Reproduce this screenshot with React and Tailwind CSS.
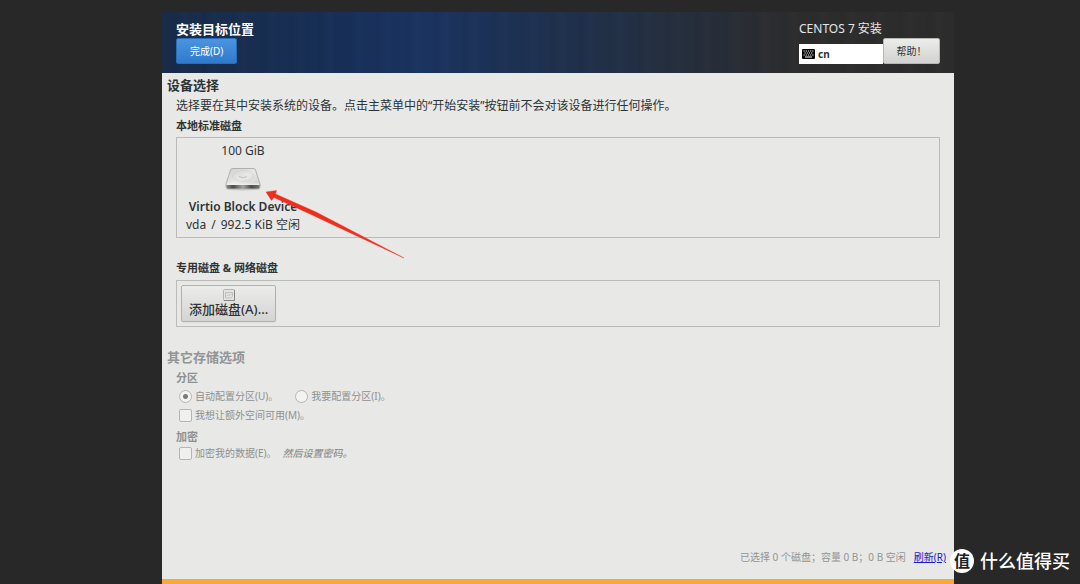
import { useState } from 'react';

const KeyboardIcon = () => (
  <svg width="13" height="10" viewBox="0 0 13 10" aria-hidden="true">
    <rect width="13" height="10" rx="1" fill="#000" />
    <path
      d="M1.500 2h1.200M3.700 2h1.200M5.900 2h1.200M8.100 2h1.200M10.300 2h1.200M2.500 4h1.200M4.700 4h1.200M6.900 4h1.200M9.100 4h1.200M1.500 6h1.200M3.700 6h1.200M5.900 6h1.200M8.100 6h1.200M10.300 6h1.200M3 8h7"
      stroke="#fff"
      strokeWidth="1.1"
    />
  </svg>
);

const DiskIcon = () => (
  <svg className="w-9 h-6" viewBox="0 0 36 24" aria-hidden="true">
    <defs>
      <linearGradient id="diskTop" x1="0" y1="0" x2="1" y2="1">
        <stop offset="0" stopColor="#cfcfcd" />
        <stop offset="0.5" stopColor="#e9e9e8" />
        <stop offset="1" stopColor="#c9c9c7" />
      </linearGradient>
      <linearGradient id="diskFront" x1="0" y1="0" x2="1" y2="0">
        <stop offset="0" stopColor="#8a8a88" />
        <stop offset="0.2" stopColor="#4a4a4a" />
        <stop offset="0.5" stopColor="#a2a2a0" />
        <stop offset="0.75" stopColor="#4a4a4a" />
        <stop offset="1" stopColor="#777" />
      </linearGradient>
    </defs>
    <ellipse cx="18" cy="22" rx="17" ry="1.500" fill="#c4c4c2" />
    <path d="M7.500 1.500h21q1.500 0 2 1.500l4.500 14v3q0 1.500-2 1.500H3q-2 0-2-1.500v-3L5.500 3q.5-1.500 2-1.500z" fill="url(#diskTop)" stroke="#999997" strokeWidth="0.7" />
    <path d="M1.500 18h33v2q0 1.500-1.500 1.500H3q-1.500 0-1.500-1.500z" fill="url(#diskFront)" />
    <path d="M2 17.200h32" stroke="#f6f6f6" strokeWidth="0.9" />
    <ellipse cx="18" cy="9" rx="10.500" ry="5.500" fill="none" stroke="#d0d0ce" strokeWidth="0.8" />
    <path d="M14 9.500q4 2.500 8 0" fill="none" stroke="#b5b5b3" strokeWidth="0.8" />
  </svg>
);

const SmallDiskIcon = () => (
  <svg width="12" height="12" viewBox="0 0 12 12" aria-hidden="true">
    <rect x="0.5" y="0.500" width="11" height="11" rx="1" fill="#e4e4e2" stroke="#b3b3b1" />
    <path d="M1 11.500h10.500V1" fill="none" stroke="#858583" />
    <path d="M2.500 3.500h7v4l-2 1.500h-5zM3.500 7l2-1.500 1.500 1 2-2" fill="none" stroke="#b5b5b3" strokeWidth="0.8" />
  </svg>
);

const RedArrow = () => (
  <svg className="absolute left-[89px] top-[52px] w-[140px] h-[70px]" viewBox="0 0 140 70" aria-hidden="true">
    <path d="M0 2L10.500 0.500L9.500 4L50 22L138 68L44 24L8 7.500L5.500 10.500Z" fill="#f02d1c" stroke="#f02d1c" strokeWidth="0.400" />
  </svg>
);

const Option = ({ type, id, name, checked, onChange, children }) => (
  <div className="flex items-center gap-[3px]">
    <input
      id={id}
      type={type}
      name={name}
      checked={checked}
      onChange={onChange}
      className={
        type === 'radio'
          ? 'appearance-none size-[13px] shrink-0 rounded-full border border-[#b4b6b4] bg-[#f3f3f2] checked:bg-[radial-gradient(circle,#777b7b_0_2px,#f3f3f2_3px)]'
          : 'appearance-none size-[13px] shrink-0 rounded-xs border border-[#b4b6b4] bg-[#f0f0ef] checked:bg-[#777b7b]'
      }
    />
    <label htmlFor={id}>{children}</label>
  </div>
);

const App = () => {
  const [partitioning, setPartitioning] = useState('auto');
  const [extraSpace, setExtraSpace] = useState(false);
  const [encrypt, setEncrypt] = useState(false);

  return (
    <div className="relative min-h-screen flex flex-col bg-[#282828] pt-3 pl-[162px] pr-[126px] text-xs leading-4 text-[#2e3436] font-['Noto_Sans','Noto_Sans_CJK_SC',sans-serif]">
      {/* Header */}
      <header className="flex justify-between px-[14px] pt-2 pb-[9px] bg-[repeating-linear-gradient(90deg,#0000_0_9px,#00000009_13px,#0000_17px,#ffffff03_23px,#0000_29px),linear-gradient(90deg,#192b48_0%,#172f57_22%,#1a3360_33%,#1f304d_50%,#252e3c_66%,#2c2c2d_80%,#2c2c2c_100%)]">
        <div>
          <h1 className="text-[13px] leading-[18px] font-bold text-white">安装目标位置</h1>
          <button
            type="button"
            className="block h-[26px] px-[13px] rounded-xs border border-[#2a6cb8] bg-linear-to-b from-[#4a94e0] to-[#2f7acb] text-[10px] text-white"
          >
            完成(D)
          </button>
        </div>
        <div>
          <p className="text-xs leading-[18px] text-[#e6e6e6]">CENTOS 7 安装</p>
          <div className="flex items-end">
            <div className="flex items-center gap-[3px] w-[84px] h-5 pl-[3px] bg-white text-[10px] font-bold text-[#2e3436]">
              <KeyboardIcon />
              <span>cn</span>
            </div>
            <button
              type="button"
              className="h-[26px] w-[57px] rounded-xs border border-[#b5b7b4] bg-linear-to-b from-[#ececeb] to-[#d2d2d0] text-[10px] text-[#2e3436]"
            >
              帮助！
            </button>
          </div>
        </div>
      </header>

      {/* Device selection */}
      <main className="flex-1 flex flex-col bg-[#e8e8e6] pt-1">
        <h2 className="pl-[5px] text-[13px] font-bold">设备选择</h2>
        <section className="px-[14px]">
          <p className="mt-[5px]">选择要在其中安装系统的设备。点击主菜单中的“开始安装”按钮前不会对该设备进行任何操作。</p>
          <h3 className="mt-1 text-[11px] font-bold">本地标准磁盘</h3>
          <div className="relative mt-[3px] flex border border-[#babcb9] pt-[5px] pb-1 pl-[9px]">
            <div className="flex flex-col items-center">
              <span>100 GiB</span>
              <div className="my-2">
                <DiskIcon />
              </div>
              <strong className="font-semibold">Virtio Block Device</strong>
              <div className="mt-0.5 flex gap-[5px]">
                <span>vda</span>
                <span>/</span>
                <span>992.5 KiB 空闲</span>
              </div>
            </div>
            <RedArrow />
          </div>

          <h3 className="mt-[22px] text-[11px] font-bold">专用磁盘 &amp; 网络磁盘</h3>
          <div className="mt-1 flex border border-[#babcb9] p-1">
            <button
              type="button"
              className="flex flex-col items-center h-[37px] px-[7px] pt-[3px] rounded-xs border border-[#b0b2af] bg-linear-to-b from-[#ececeb] to-[#d4d4d2] text-[13px] font-medium shadow-xs"
            >
              <SmallDiskIcon />
              <span>添加磁盘(A)...</span>
            </button>
          </div>
        </section>

        {/* Other storage options */}
        <h2 className="mt-[22px] pl-[5px] text-[13px] font-bold text-[#929595]">其它存储选项</h2>
        <section className="px-[14px] text-[10px] text-[#8e9191]">
          <h3 className="mt-[5px] text-[11px] font-bold">分区</h3>
          <div className="mt-0.5 pl-[3px] flex gap-[17px]">
            <Option type="radio" id="auto" name="partitioning" checked={partitioning === 'auto'} onChange={() => setPartitioning('auto')}>
              自动配置分区(U)。
            </Option>
            <Option type="radio" id="manual" name="partitioning" checked={partitioning === 'manual'} onChange={() => setPartitioning('manual')}>
              我要配置分区(I)。
            </Option>
          </div>
          <div className="mt-[3px] pl-[3px]">
            <Option type="checkbox" id="extra" checked={extraSpace} onChange={(e) => setExtraSpace(e.target.checked)}>
              我想让额外空间可用(M)。
            </Option>
          </div>
          <h3 className="mt-1.5 text-[11px] font-bold">加密</h3>
          <div className="pl-[3px] flex gap-1.5">
            <Option type="checkbox" id="encrypt" checked={encrypt} onChange={(e) => setEncrypt(e.target.checked)}>
              加密我的数据(E)。
            </Option>
            <em className="font-medium">然后设置密码。</em>
          </div>
        </section>

        <footer className="mt-auto flex justify-end gap-2 pr-2 pb-[14px] text-[10px] text-[#929595]">
          <span>已选择 0 个磁盘；容量 0 B；0 B 空闲</span>
          <a href="#refresh" className="text-[#1a1ac8] underline">刷新(R)</a>
        </footer>
      </main>
      <div className="h-[5px] bg-[#f9a938]" />

      {/* Watermark */}
      <div className="absolute right-[10px] bottom-[11px] flex items-center gap-1.5 text-white">
        <span className="flex items-center justify-center size-6 rounded-full bg-white text-base font-bold text-[#222]">值</span>
        <span className="text-lg leading-6 font-medium">什么值得买</span>
      </div>
    </div>
  );
};

export default App;
